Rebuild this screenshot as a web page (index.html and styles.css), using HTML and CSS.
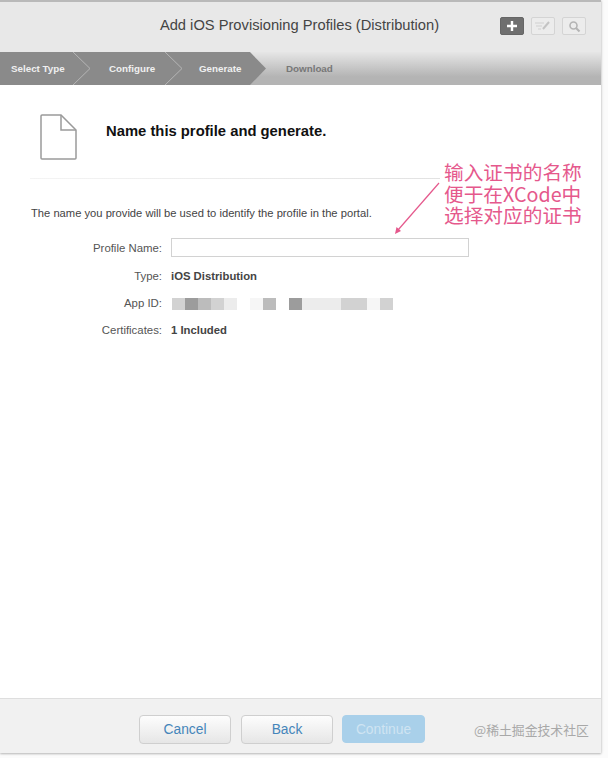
FILE: index.html
```html
<!DOCTYPE html>
<html lang="en">
<head>
    <meta charset="UTF-8">
    <meta name="viewport" content="width=device-width, initial-scale=1.0">
    <title>Add iOS Provisioning Profiles (Distribution)</title>
    <link rel="stylesheet" href="styles.css">
</head>
<body>
    <div class="panel">
        <header class="header">
            <h1 class="title">Add iOS Provisioning Profiles (Distribution)</h1>
            <div class="tools">
                <div class="tool tool-active">
                    <svg width="14" height="14" viewBox="0 0 14 14"><path d="M7 2v10M2 7h10" stroke="#fff" stroke-width="2.4"/></svg>
                </div>
                <div class="tool">
                    <svg width="18" height="12" viewBox="0 0 18 12" fill="none"><path d="M1 3h9M2 6h6M4 9h3" stroke="#d0d0d0" stroke-width="1"/><path d="M9 9l6-7" stroke="#c4c4c4" stroke-width="2"/></svg>
                </div>
                <div class="tool">
                    <svg width="13" height="13" viewBox="0 0 13 13" fill="none"><circle cx="5.5" cy="5.5" r="3.5" stroke="#b4b4b4" stroke-width="1.6"/><path d="M8 8l3.5 3.5" stroke="#b4b4b4" stroke-width="2"/></svg>
                </div>
            </div>
        </header>

        <nav class="steps">
            <div class="steps-done">
                <div class="step step-one">Select Type</div>
                <svg class="chevron" width="18" height="33" viewBox="0 0 18 33" fill="none"><path d="M0 0l17 16.500L0 33" stroke="#b5b5b5"/></svg>
                <div class="step step-two">Configure</div>
                <svg class="chevron" width="18" height="33" viewBox="0 0 18 33" fill="none"><path d="M0 0l17 16.500L0 33" stroke="#b5b5b5"/></svg>
                <div class="step step-three">Generate</div>
            </div>
            <div class="step step-todo">Download</div>
        </nav>

        <main class="content">
            <div class="intro">
                <svg class="doc-icon" width="37" height="46" viewBox="0 0 37 46" fill="none">
                    <path d="M2 1h19l15 15v28a1 1 0 0 1-1 1H2a1 1 0 0 1-1-1V2a1 1 0 0 1 1-1z" stroke="#9a9a9a" stroke-width="1.500"/>
                    <path d="M21 1v15h15" stroke="#9a9a9a" stroke-width="1.500"/>
                </svg>
                <h2 class="heading">Name this profile and generate.</h2>
            </div>
            <div class="divider"></div>
            <p class="hint">The name you provide will be used to identify the profile in the portal.</p>

            <div class="form">
                <div class="row row-input">
                    <div class="label">Profile Name:</div>
                    <input class="name-input" type="text">
                </div>
                <div class="row">
                    <div class="label">Type:</div>
                    <div class="value">iOS Distribution</div>
                </div>
                <div class="row">
                    <div class="label">App ID:</div>
                    <div class="redacted">
                        <span class="px w13 g1"></span><span class="px w13 g3"></span><span class="px w13 g2"></span><span class="px w13 g1"></span><span class="px w13 g0"></span>
                        <span class="px w13 gap"></span><span class="px w13 g0 faint"></span><span class="px w13 g2"></span><span class="px w13 gap"></span><span class="px w13 g3"></span><span class="px w13 g0"></span><span class="px w26 g0"></span><span class="px w26 g1"></span><span class="px w13 g0 faint"></span><span class="px w13 g1"></span>
                    </div>
                </div>
                <div class="row">
                    <div class="label">Certificates:</div>
                    <div class="value">1 Included</div>
                </div>
            </div>

            <div class="note">
                <div class="note-line">输入证书的名称</div>
                <div class="note-line">便于在XCode中</div>
                <div class="note-line">选择对应的证书</div>
            </div>
            <svg class="note-arrow" width="50" height="56" viewBox="0 0 50 56" fill="none">
                <path d="M45 2L4 49" stroke="#e5588c" stroke-width="1.200"/>
                <path d="M1 53l1.500-7 4.500 4z" fill="#e5588c"/>
            </svg>
        </main>

        <footer class="footer">
            <button class="btn" type="button">Cancel</button>
            <button class="btn" type="button">Back</button>
            <button class="btn btn-primary" type="button">Continue</button>
            <div class="watermark">@稀土掘金技术社区</div>
        </footer>
    </div>
</body>
</html>
```

FILE: styles.css
```css
* {
    box-sizing: border-box;
}

html, body {
    height: 100%;
}

body {
    margin: 0;
    background-color: #fbfbfb;
    font-family: "Liberation Sans", Arial, sans-serif;
    color: #444;
    overflow: hidden;
}

.panel {
    width: 601px;
    height: 753px;
    display: flex;
    flex-direction: column;
    box-shadow: 0 1px 2px rgba(0,0,0,0.25), 1px 0 3px rgba(0,0,0,0.08);
}

.header {
    position: relative;
    height: 52px;
    flex-shrink: 0;
    display: flex;
    align-items: center;
    justify-content: center;
    background-color: #e8e8e8;
    border-top: 2px solid #b9b9b9;
}

.title {
    margin: -4px 2px 0 0;
    font-size: 14.700px;
    font-weight: 400;
    color: #444;
}

.tools {
    position: absolute;
    top: 15px;
    left: 500px;
    display: flex;
    gap: 7px;
}

.tool {
    width: 24px;
    height: 18px;
    display: flex;
    align-items: center;
    justify-content: center;
    border: 1px solid #d4d4d4;
    border-radius: 2px;
    background-color: #ececec;
}

.tool-active {
    background-color: #6f6f6f;
    border-color: #666;
}

.steps {
    height: 33px;
    flex-shrink: 0;
    display: flex;
    background: linear-gradient(#e6e6e6, #d2d2d2 30%, #b4b4b4 75%);
}

.steps-done {
    width: 266px;
    display: flex;
    background-color: #8a8a8a;
    clip-path: polygon(0 0, 250px 0, 266px 16.500px, 250px 33px, 0 33px);
}

.step {
    font-size: 9.800px;
    font-weight: 700;
    line-height: 33px;
    color: #f0f0f0;
}

.chevron {
    flex-shrink: 0;
}

.step-one {
    width: 73px;
    padding-left: 11px;
}

.step-two {
    width: 74px;
    padding-left: 18px;
}

.step-three {
    padding-left: 16px;
}

.step-todo {
    margin-left: 20px;
    color: #777;
}

.content {
    position: relative;
    flex: 1;
    background-color: #fff;
}

.intro {
    display: flex;
    align-items: center;
    padding: 29px 0 0 40px;
}

.doc-icon {
    flex-shrink: 0;
}

.heading {
    margin: 0 0 0 29px;
    font-size: 14.800px;
    font-weight: 700;
    color: #111;
    position: relative;
    top: -6px;
}

.divider {
    height: 1px;
    margin: 18px 0 0 30px;
    width: 410px;
    background: linear-gradient(to right, #f4f4f4, #e2e2e2);
}

.hint {
    margin: 27px 0 0 31px;
    font-size: 11.200px;
    line-height: 14px;
    color: #444;
}

.form {
    margin-top: 18px;
    display: flex;
    flex-direction: column;
}

.row {
    display: flex;
    align-items: center;
    height: 27px;
}

.row-input {
    height: 19px;
    margin-bottom: 5px;
}

.label {
    width: 162px;
    text-align: right;
    font-size: 11.400px;
    color: #555;
}

.value {
    margin-left: 9px;
    font-size: 11.300px;
    font-weight: 700;
    color: #444;
}

.name-input {
    width: 298px;
    height: 19px;
    margin: 0 0 0 9px;
    padding: 0;
    border: 1px solid #d2d2d2;
    background-color: #fff;
}

.redacted {
    display: flex;
    margin: 2px 0 0 10px;
    height: 12px;
}

.px {
    display: block;
    height: 12px;
}

.w13 {
    width: 13px;
}

.w26 {
    width: 26px;
}

.gap {
    background-color: #fff;
}

.g0 {
    background-color: #ececec;
}

.g1 {
    background-color: #d2d2d2;
}

.g2 {
    background-color: #bcbcbc;
}

.g3 {
    background-color: #9c9c9c;
}

.faint {
    background-color: #f6f6f6;
}

.note {
    position: absolute;
    left: 444px;
    top: 76px;
    font-family: "Noto Sans CJK SC", "Liberation Sans", sans-serif;
    font-size: 19.700px;
    color: #e5588c;
    white-space: nowrap;
}

.note-line {
    height: 21.500px;
    line-height: 21.500px;
}

.note-arrow {
    position: absolute;
    left: 394px;
    top: 96px;
}

.footer {
    position: relative;
    height: 55px;
    flex-shrink: 0;
    display: flex;
    align-items: flex-start;
    padding: 16px 0 0 139px;
    gap: 10px;
    background-color: #f1f1f1;
    border-top: 1px solid #dedede;
}

.btn {
    width: 92px;
    height: 29px;
    padding: 0;
    font-family: inherit;
    font-size: 13.800px;
    color: #4585ba;
    background: linear-gradient(#fdfdfd, #e6e6e6);
    border: 1px solid #cfcfcf;
    border-radius: 4px;
}

.btn-primary {
    width: 83px;
    height: 28px;
    margin-left: -1px;
    color: #cfe4f2;
    background: #a9d0ea;
    border-color: #a9d0ea;
}

.watermark {
    position: absolute;
    left: 474px;
    top: 21px;
    font-family: "Noto Sans CJK SC", sans-serif;
    font-size: 12.850px;
    line-height: 20px;
    color: #a8a8a8;
    white-space: nowrap;
}
```
